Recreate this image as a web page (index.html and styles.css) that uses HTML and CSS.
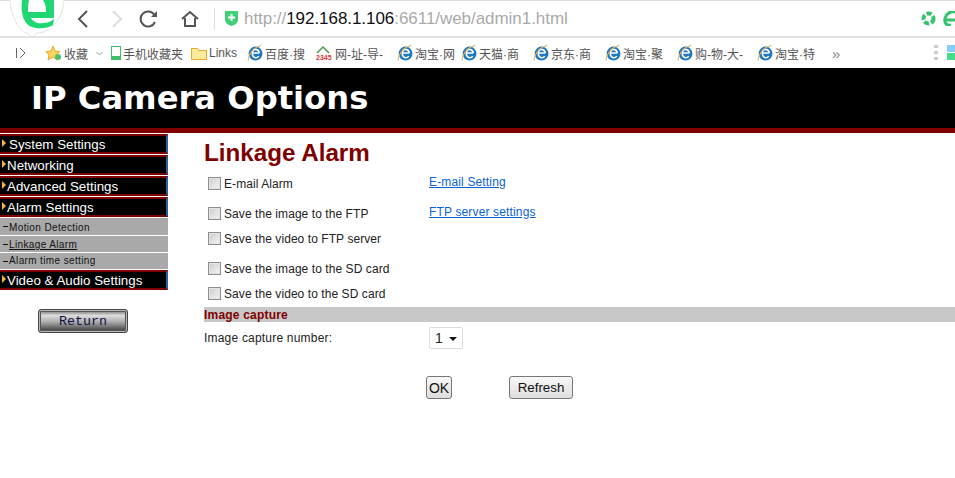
FILE: index.html
```html
<!DOCTYPE html>
<html lang="en">
<head>
    <meta charset="UTF-8">
    <title>IP Camera Options</title>
    <link rel="stylesheet" href="styles.css">
</head>
<body>

    <!-- Browser toolbar -->
    <div class="toolbar">
        <svg class="logo-tab" width="56" height="38" viewBox="0 0 56 38">
            <path d="M1 -2C1 18 12 33 18 33L23 37L28 33C42 33 55 18 55 -2Z" fill="#fff" stroke="#e4e4e4"/>
            <path fill-rule="evenodd" d="M12 0H45V18H22C24 22 29 24 34 23C38 23 41 22 45 19L44 25C38 29 29 29 23 27C16 25 11 15 13 0ZM19 12H37C37 6 36 3 34 0H20C19 4 19 8 19 12Z" fill="#1fd873"/>
        </svg>
        <div class="nav-icons">
            <svg width="16" height="18" viewBox="0 0 16 18"><path d="M12 1L4 9l8 8" fill="none" stroke="#555" stroke-width="2"/></svg>
            <svg class="nav-forward" width="16" height="18" viewBox="0 0 16 18"><path d="M5 1l8 8-8 8" fill="none" stroke="#ddd" stroke-width="2"/></svg>
            <svg class="nav-reload" width="20" height="18" viewBox="0 0 20 18"><path d="M16 12a7.500 7.500 0 1 1 -.500 -7" fill="none" stroke="#555" stroke-width="2"/><path d="M18 1v6h-6z" fill="#555"/></svg>
            <svg class="nav-home" width="20" height="18" viewBox="0 0 20 18"><path d="M2 9l8-7 8 7M5 8v8h10V8" fill="none" stroke="#555" stroke-width="2"/></svg>
        </div>
        <div class="address">
            <svg width="15" height="17" viewBox="0 0 15 17"><path d="M1 1h13v8c0 4-3 6-6.500 7C4 15 1 13 1 9z" fill="#3fcf75"/><path d="M7.500 4v7M4 7.500h7" stroke="#fff" stroke-width="2"/></svg>
            <span class="url">http://<b>192.168.1.106</b>:6611/web/admin1.html</span>
        </div>
        <div class="ext-icons">
            <svg width="15" height="15" viewBox="0 0 15 15"><circle cx="7.500" cy="7.500" r="5" fill="none" stroke="#35c46c" stroke-width="4" stroke-dasharray="5 2"/></svg>
            <svg width="14" height="15" viewBox="0 0 14 15"><path d="M2 9h12M3 5c-3 6 0 10 5 9M3 5c2-4 6-5 11-4" fill="none" stroke="#35c46c" stroke-width="3"/></svg>
        </div>
    </div>

    <!-- Favourites bar -->
    <div class="favbar">
        <span class="sidebar-toggle"><svg width="12" height="12" viewBox="0 0 12 12"><path d="M1.500 1v10M5 1l5 5-5 5" fill="none" stroke="#666"/></svg></span>
        <span class="fav fav-star"><svg width="17" height="16" viewBox="0 0 17 16"><path d="M8 1l2 5 5 .500-4 3.500 1 5-4-3-5 3 1-5-3-3.500 5-.500z" fill="#fbd45c" stroke="#e5a92e"/><circle cx="13" cy="12" r="3" fill="#4cc26c"/></svg>收藏<svg class="caret" width="7" height="5" viewBox="0 0 7 5"><path d="M.500 1l3 3 3-3" fill="none" stroke="#999"/></svg></span>
        <span class="fav fav-phone"><svg class="phone" width="10" height="14" viewBox="0 0 10 14"><rect x=".5" y=".5" width="9" height="13" fill="#fff" stroke="#3fbf6a"/><rect x="1" y="10" width="8" height="3" fill="#3fbf6a"/></svg>手机收藏夹</span>
        <span class="fav fav-links"><svg width="16" height="13" viewBox="0 0 16 13"><path d="M.5 12.500V1.500h6l1 2h8v9z" fill="#fdeb9c" stroke="#e2ac2c"/></svg>Links</span>
        <span class="fav fav-baidu"><svg class="ie" viewBox="0 0 15 15"><use href="#ie"/></svg>百度·搜</span>
        <span class="fav fav-2345"><svg width="17" height="16" viewBox="0 0 17 16"><path d="M1 8l6-6 6 6" fill="none" stroke="#4a9a4a" stroke-width="1.500"/><text x="0" y="15" class="mini">2345</text></svg>网-址-导-</span>
        <span class="fav fav-taobao"><svg class="ie" viewBox="0 0 15 15"><use href="#ie"/></svg>淘宝·网</span>
        <span class="fav fav-tmall"><svg class="ie" viewBox="0 0 15 15"><use href="#ie"/></svg>天猫·商</span>
        <span class="fav fav-jd"><svg class="ie" viewBox="0 0 15 15"><use href="#ie"/></svg>京东·商</span>
        <span class="fav fav-ju"><svg class="ie" viewBox="0 0 15 15"><use href="#ie"/></svg>淘宝·聚</span>
        <span class="fav fav-gou"><svg class="ie" viewBox="0 0 15 15"><use href="#ie"/></svg>购-物-大-</span>
        <span class="fav fav-te"><svg class="ie" viewBox="0 0 15 15"><use href="#ie"/></svg>淘宝·特</span>
        <span class="more">&raquo;</span>
        <span class="grip"><i></i><i></i><i></i></span>
        <span class="squares"><i class="sq-blue"></i><i class="sq-green"></i></span>
    </div>

    <svg class="defs" width="0" height="0">
        <symbol id="ie" viewBox="0 0 15 15">
            <circle cx="8" cy="8" r="6.500" fill="#1f78c1"/>
            <path d="M4.500 7.500h7M5 7.500c0-5 6-4 6.500 0M5 8c0 4 4 5 6 2.500" fill="none" stroke="#fff" stroke-width="1.500"/>
            <path d="M1.500 14.500C0 10 6 2 13.500 .500" fill="none" stroke="#e8b85a"/>
        </symbol>
    </svg>

    <div class="page-header">
        <h1>IP Camera Options</h1>
    </div>

    <div class="page-body">
        <div class="sidebar">
            <div class="menu-item first">System Settings</div>
            <div class="menu-item">Networking</div>
            <div class="menu-item">Advanced Settings</div>
            <div class="menu-item">Alarm Settings</div>
            <div class="sub-item tall">Motion Detection</div>
            <div class="sub-item link-item"><a href="#">Linkage Alarm</a></div>
            <div class="sub-item">Alarm time setting</div>
            <div class="menu-item">Video &amp; Audio Settings</div>
            <button class="return-button">Return</button>
        </div>

        <div class="content">
            <h2>Linkage Alarm</h2>
            <div class="check-row row-email">
                <label><input type="checkbox"><span>E-mail Alarm</span></label>
                <a href="#">E-mail Setting</a>
            </div>
            <div class="check-row row-ftp-image">
                <label><input type="checkbox"><span>Save the image to the FTP</span></label>
                <a href="#">FTP server settings</a>
            </div>
            <div class="check-row row-ftp-video">
                <label><input type="checkbox"><span>Save the video to FTP server</span></label>
            </div>
            <div class="check-row row-sd-image">
                <label><input type="checkbox"><span>Save the image to the SD card</span></label>
            </div>
            <div class="check-row row-sd-video">
                <label><input type="checkbox"><span>Save the video to the SD card</span></label>
            </div>
            <div class="section-bar">Image capture</div>
            <div class="capture-row">
                <span class="capture-label">Image capture number:</span>
                <span class="select-box">1<i></i></span>
            </div>
            <div class="button-row">
                <button class="form-button ok">OK</button>
                <button class="form-button refresh">Refresh</button>
            </div>
        </div>
    </div>

</body>
</html>
```

FILE: styles.css
```css
body {
    margin: 0;
    padding: 0;
    height: 478px;
    overflow: hidden;
    background-color: #fff;
    font-family: "Liberation Sans", Arial, sans-serif;
}

.toolbar {
    height: 35px;
    display: flex;
    align-items: center;
    border-top: 1px solid #ddd;
    border-bottom: 2px solid #e2e2e2;
    position: relative;
}

.logo-tab {
    position: absolute;
    left: 9px;
    top: -1px;
}

.nav-icons {
    display: flex;
    align-items: center;
    margin-left: 75px;
}

.nav-forward { margin-left: 17px; }
.nav-reload { margin-left: 15px; }
.nav-home { margin-left: 21px; }

.address {
    display: flex;
    align-items: center;
    gap: 5px;
    margin-left: 14px;
    padding-left: 9px;
    border-left: 1px solid #ddd;
    height: 22px;
}

.url {
    font-size: 17px;
    letter-spacing: -0.05px;
    color: #aaa;
}

.url b {
    font-weight: normal;
    color: #111;
}

.ext-icons {
    margin-left: auto;
    display: flex;
    gap: 7px;
    margin-right: -2px;
}

.favbar {
    height: 30px;
    display: flex;
    align-items: center;
    position: relative;
    font-family: "Liberation Sans", "Noto Sans CJK SC", sans-serif;
    font-size: 12px;
    color: #555;
}

.sidebar-toggle {
    display: flex;
    margin-left: 15px;
    width: 30px;
}

.fav {
    display: flex;
    align-items: center;
    gap: 2px;
    white-space: nowrap;
}

.fav-star { width: 66px; }
.fav-phone { width: 80px; }
.fav-links { width: 56px; }
.fav-baidu { width: 69px; }
.fav-2345 { width: 81px; }
.fav-taobao { width: 64px; }
.fav-tmall { width: 72px; }
.fav-jd { width: 72px; }
.fav-ju { width: 72px; }
.fav-gou { width: 80px; }
.fav-te { width: 75px; }

.caret {
    margin-left: 6px;
}

.ie {
    width: 16px;
    height: 16px;
}

.mini {
    font-size: 7px;
    font-weight: bold;
    fill: #d33;
}

.more {
    color: #888;
    font-size: 15px;
}

.grip {
    position: absolute;
    left: 934px;
    top: 7px;
    display: flex;
    flex-direction: column;
    gap: 3px;
}

.grip i {
    width: 4px;
    height: 3px;
    background-color: #ccc;
}

.squares {
    position: absolute;
    left: 947px;
    top: 7px;
    display: flex;
    flex-direction: column;
    gap: 1px;
}

.squares i {
    width: 8px;
    height: 7px;
}

.sq-blue { background-color: #86cdfb; }
.sq-green { background-color: #45dd8c; }

.defs {
    position: absolute;
}

.page-header {
    height: 60px;
    background-color: #000;
    border-bottom: 5px solid #800000;
    display: flex;
    align-items: center;
}

.page-header h1 {
    margin: 0 0 0 31px;
    font-family: "DejaVu Sans", Verdana, sans-serif;
    font-size: 32.2px;
    font-weight: bold;
    color: #fff;
}

.page-body {
    display: flex;
}

.sidebar {
    width: 168px;
    padding-top: 1px;
    flex-shrink: 0;
}

.menu-item {
    box-sizing: border-box;
    height: 20px;
    padding-left: 7px;
    margin-bottom: 1px;
    background-color: #000;
    border-top: 2px solid #800000;
    border-bottom: 2px solid #800000;
    border-right: 2px solid #2d5f96;
    color: #fff;
    font-size: 13.33px;
    line-height: 18px;
    position: relative;
}

.menu-item::before {
    content: "";
    position: absolute;
    left: 2px;
    top: 3px;
    border-left: 4px solid #f5b63a;
    border-top: 4px solid transparent;
    border-bottom: 4px solid transparent;
}

.menu-item.first {
    padding-left: 9px;
}

.sub-item {
    height: 16px;
    margin-bottom: 1px;
    padding-left: 9px;
    background-color: #a9a9a9;
    color: #111;
    font-size: 10px;
    letter-spacing: 0.37px;
    line-height: 16px;
    position: relative;
}

.sub-item.tall {
    height: 17px;
    line-height: 19px;
}

.sub-item.link-item {
    line-height: 18px;
}

.sub-item::before {
    content: "";
    position: absolute;
    left: 3px;
    top: 8px;
    width: 5px;
    height: 1px;
    background-color: #111;
}

.sub-item a {
    color: #111;
}

.return-button {
    display: block;
    box-sizing: border-box;
    width: 90px;
    height: 24px;
    margin: 19px 0 0 38px;
    padding: 0;
    border: 1px solid #444;
    border-radius: 3px;
    box-shadow: inset 0 0 0 1px #bbb, inset 0 0 0 2px #555;
    background: linear-gradient(#666, #ddd 25%, #aaa 55%, #333);
    color: #114;
    font-family: "Liberation Mono", monospace;
    font-size: 13.33px;
}

.content {
    flex: 1;
    padding-left: 36px;
    font-size: 12px;
    color: #222;
}

.content h2 {
    margin: 6px 0 0 0;
    height: 28px;
    font-size: 24.2px;
    line-height: 28px;
    color: #800000;
}

.check-row {
    display: flex;
    align-items: center;
    height: 16px;
    padding-left: 4px;
}

.check-row label {
    display: flex;
    align-items: center;
    gap: 3px;
    width: 221px;
    letter-spacing: 0.07px;
}

.check-row input {
    width: 13px;
    height: 13px;
    margin: -2px 0 0 0;
    appearance: none;
    border: 1px solid #8e8e8e;
    background: linear-gradient(135deg, #ccc, #f6f6f6);
    box-shadow: inset 0 0 0 1px #e4e4e4;
}

.check-row a {
    color: #0a63d6;
    margin-top: -5px;
    letter-spacing: 0.15px;
}

.row-email { margin-top: 9px; }
.row-ftp-image { margin-top: 14px; }
.row-ftp-video { margin-top: 9px; }
.row-sd-image { margin-top: 14px; }
.row-sd-video { margin-top: 9px; }

.section-bar {
    height: 15px;
    margin-top: 5px;
    background-color: #c8c8c8;
    color: #800000;
    font-weight: bold;
    letter-spacing: 0.2px;
    line-height: 17px;
}

.capture-row {
    display: flex;
    align-items: center;
    height: 22px;
    margin-top: 5px;
}

.capture-label {
    width: 225px;
    letter-spacing: 0.2px;
}

.select-box {
    width: 34px;
    height: 22px;
    box-sizing: border-box;
    padding-left: 5px;
    border: 1px solid #ddd;
    border-radius: 2px;
    font-size: 14px;
    line-height: 20px;
    position: relative;
}

.select-box i {
    position: absolute;
    right: 5px;
    top: 9px;
    border-top: 4px solid #111;
    border-left: 4px solid transparent;
    border-right: 4px solid transparent;
}

.button-row {
    display: flex;
    margin: 27px 0 0 222px;
    gap: 57px;
}

.form-button {
    height: 23px;
    padding: 0;
    border: 1px solid #777;
    border-radius: 3px;
    background: linear-gradient(#f8f8f8, #ddd);
    color: #111;
    font-family: "Liberation Sans", Arial, sans-serif;
    font-size: 13.33px;
}

.ok { width: 26px; font-size: 14px; }
.refresh { width: 64px; }
```
